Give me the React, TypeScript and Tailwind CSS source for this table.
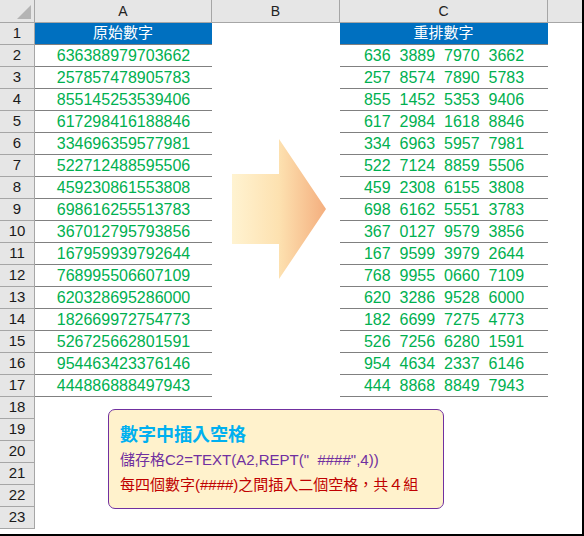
import React from "react";

const A = [
  "636388979703662",
  "257857478905783",
  "855145253539406",
  "617298416188846",
  "334696359577981",
  "522712488595506",
  "459230861553808",
  "698616255513783",
  "367012795793856",
  "167959939792644",
  "768995506607109",
  "620328695286000",
  "182669972754773",
  "526725662801591",
  "954463423376146",
  "444886888497943",
];

const fmt = (s: string) =>
  [s.slice(0, 3), s.slice(3, 7), s.slice(7, 11), s.slice(11, 15)].join("  ");

const FONT = { fontFamily: '"Liberation Sans", "Noto Sans CJK TC", sans-serif' };

export default function App() {
  const rows = Array.from({ length: 23 }, (_, i) => i + 1);
  return (
    <div
      className="relative w-[584px] h-[536px] overflow-hidden bg-white border-r-2 border-b-2 border-black"
      style={FONT}
    >
      <div className="grid grid-cols-[35px_177px_128px_208px_34px] grid-rows-[23px_repeat(24,22px)]">
        {/* header row */}
        <div className="bg-[#e6e6e6] border-r border-b border-[#a6a6a6] relative">
          <svg className="absolute right-[3px] bottom-[3px]" width="14" height="14" viewBox="0 0 14 14">
            <polygon points="14,0 14,14 0,14" fill="#b4b4b4" />
          </svg>
        </div>
        <div className="bg-[#e6e6e6] border-r border-b border-[#a6a6a6] flex items-center justify-center text-[14px] text-[#222]">A</div>
        <div className="bg-[#e6e6e6] border-r border-b border-[#a6a6a6] flex items-center justify-center text-[14px] text-[#222]">B</div>
        <div className="bg-[#e6e6e6] border-r border-b border-[#a6a6a6] flex items-center justify-center text-[14px] text-[#222]">C</div>
        <div className="bg-[#e6e6e6] border-b border-[#a6a6a6]"></div>

        {rows.map((r) => {
          const isHead = r === 1;
          const isData = r >= 2 && r <= 17;
          const v = isData ? A[r - 2] : "";
          return (
            <React.Fragment key={r}>
              <div className="bg-[#e6e6e6] border-r border-b border-[#a6a6a6] flex items-center justify-center text-[15px] text-[#1a1a1a]">
                {r}
              </div>
              <div
                className={
                  isHead
                    ? "bg-[#0070c0] border-b border-[#808080] flex items-center justify-center text-white text-[15px] pr-[1px]"
                    : isData
                    ? "border-b border-[#808080] flex items-center justify-center text-[#00b050] text-[16px]"
                    : ""
                }
              >
                {isHead ? "原始數字" : v}
              </div>
              <div></div>
              <div
                className={
                  isHead
                    ? "bg-[#0070c0] border-b border-[#808080] flex items-center justify-center text-white text-[15px] pr-[1px]"
                    : isData
                    ? "border-b border-[#808080] flex items-center justify-center text-[#00b050] text-[16px] whitespace-pre"
                    : ""
                }
              >
                {isHead ? "重排數字" : isData ? fmt(v) : ""}
              </div>
              <div></div>
            </React.Fragment>
          );
        })}
      </div>

      {/* Arrow */}
      <svg className="absolute left-[232px] top-[139px]" width="95" height="141" viewBox="0 0 95 141">
        <defs>
          <linearGradient id="ag" x1="0" y1="0" x2="1" y2="0">
            <stop offset="0" stopColor="#fff3d1" />
            <stop offset="0.5" stopColor="#fde1b0" />
            <stop offset="1" stopColor="#f4ae7e" />
          </linearGradient>
        </defs>
        <polygon points="0,35 47,35 47,0 94,70 47,140 47,105 0,105" fill="url(#ag)" />
      </svg>

      {/* Callout */}
      <div className="absolute left-[108px] top-[409px] w-[336px] h-[100px] rounded-[7px] border-[1.5px] border-[#7030a0] bg-[#fff2cc] pl-[11px] pt-[10px]">
        <div className="text-[18px] font-bold text-[#00b0f0] leading-[26px]" style={{ fontFamily: '"Noto Sans CJK TC", sans-serif' }}>
          數字中插入空格
        </div>
        <div className="mt-[3px] text-[15px] text-[#7030a0] leading-[22px] whitespace-pre">
          儲存格C2=TEXT(A2,REPT("  ####",4))
        </div>
        <div className="mt-[3px] text-[15px] text-[#c00000] leading-[22px] whitespace-pre">
          每四個數字(####)之間插入二個空格，共４組
        </div>
      </div>
    </div>
  );
}
